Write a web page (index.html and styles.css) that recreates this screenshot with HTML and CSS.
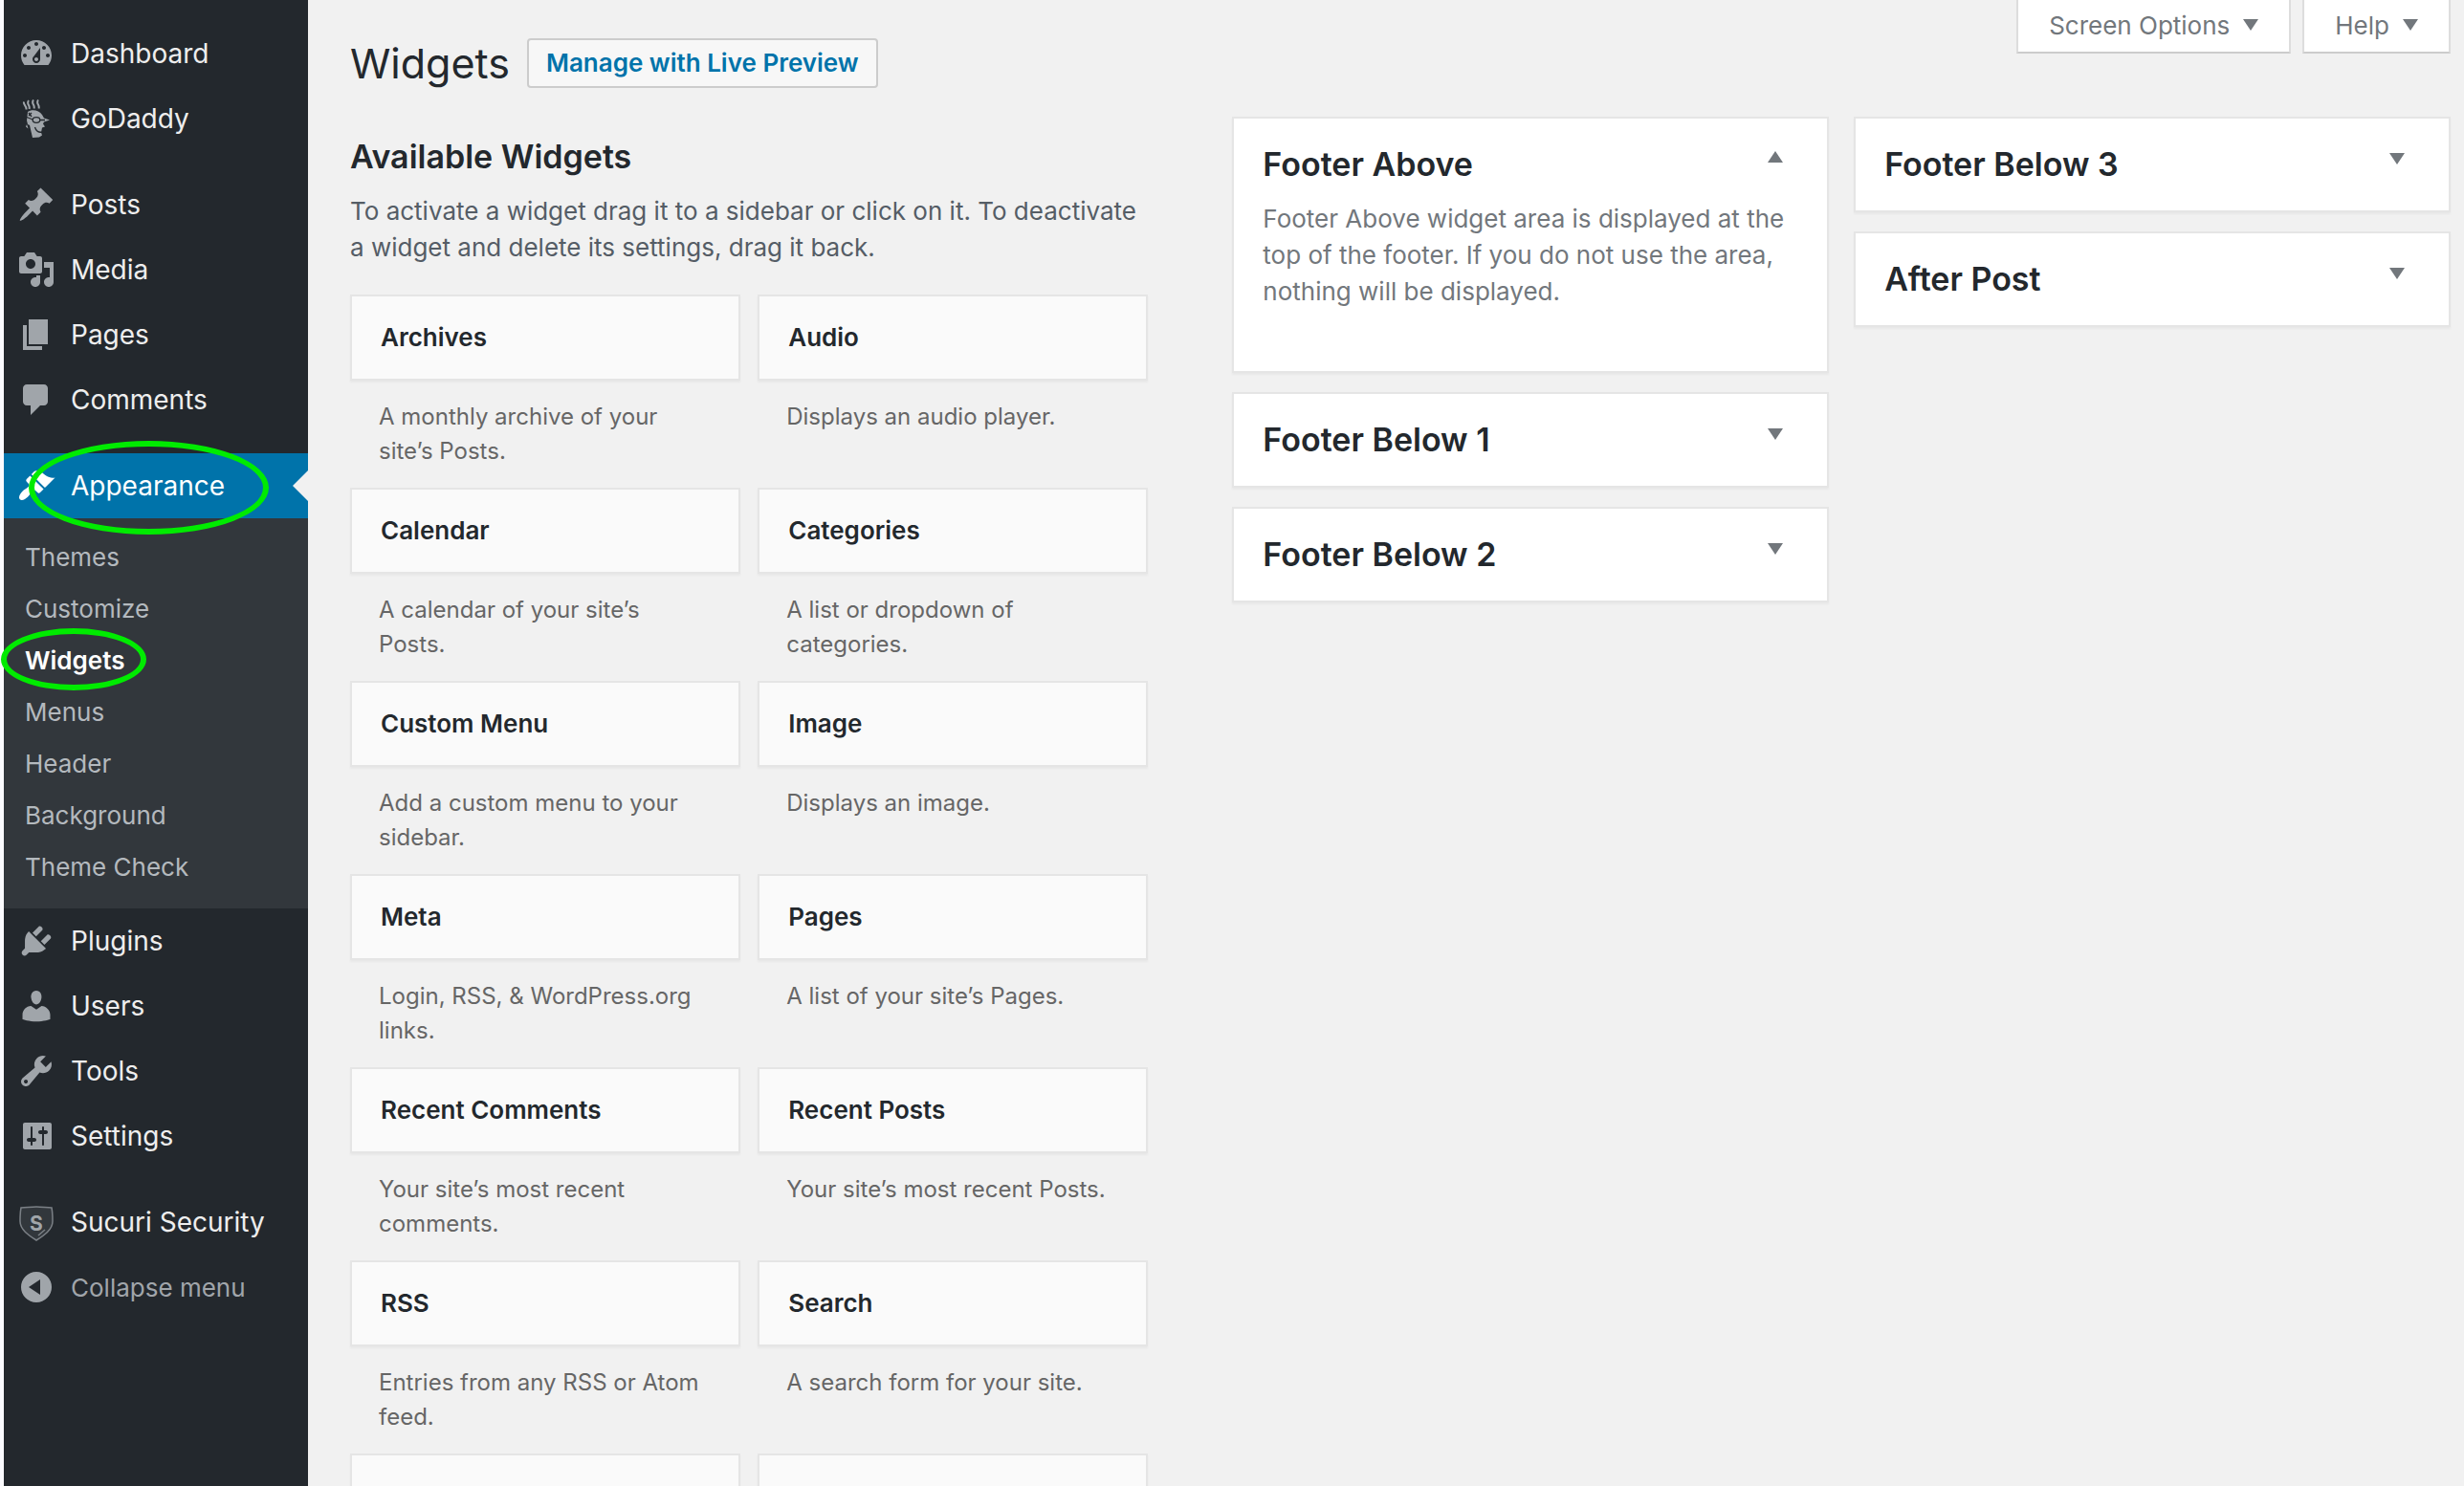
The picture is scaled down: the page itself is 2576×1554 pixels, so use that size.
FILE: index.html
```html
<!DOCTYPE html>
<html lang="en">
<head>
    <meta charset="UTF-8">
    <meta name="viewport" content="width=device-width, initial-scale=1.0">
    <title>Widgets</title>
    <link rel="stylesheet" href="styles.css">
</head>
<body>
    <nav class="admin-menu">
        <ul class="menu-list">
            <li><a class="menu-item" href="#">
                <svg class="icon" viewBox="0 0 20 20"><path d="M3.76 16h12.48c1.1-1.37 1.76-3.11 1.76-5 0-4.42-3.58-8-8-8s-8 3.58-8 8c0 1.89.66 3.63 1.76 5zM10 4c.55 0 1 .45 1 1s-.45 1-1 1-1-.45-1-1 .45-1 1-1zM6 6c.55 0 1 .45 1 1s-.45 1-1 1-1-.45-1-1 .45-1 1-1zm8 0c.55 0 1 .45 1 1s-.45 1-1 1-1-.45-1-1 .45-1 1-1zm-5.37 5.55L12 7v6c0 1.1-.9 2-2 2s-2-.9-2-2c0-.57.24-1.08.63-1.45zM4 10c.55 0 1 .45 1 1s-.45 1-1 1-1-.45-1-1 .45-1 1-1zm12 0c.55 0 1 .45 1 1s-.45 1-1 1-1-.45-1-1 .45-1 1-1zm-5 3c0-.55-.45-1-1-1s-1 .45-1 1 .45 1 1 1 1-.45 1-1z" fill-rule="evenodd"/></svg>
                Dashboard</a></li>
            <li><a class="menu-item" href="#">
                <svg class="icon" viewBox="0 0 40 40">
                    <g fill="none" stroke="#a0a5aa" stroke-width="2"><path d="M7 2.500c-1 3 3 4 2.500 8M12 1c-3 4 2 5 .5 9M17 .500c-3 4 2 5 .5 9M22 .500c-3 4 2 5 .5 9"/></g>
                    <path d="M11 13c4-3 12-2 15 3l2 3.500 6 2-6 2-1 2 2 3-3 1-1 5 1 3-3 2-7 .5-3-13-2-1-1-4z"/>
                    <path d="M10 26l1.500 4.500-2.500-2z"/>
                    <g fill="none" stroke="#23282d" stroke-width="1.300"><ellipse cx="20" cy="21.500" rx="3.800" ry="2.800"/><path d="M10 18.500l6.200 2.500M24 21.500h5M18.500 29c1 4 4 6 7.500 5M12 14l3 4M15 14l-3 3"/></g>
                </svg>
                GoDaddy</a></li>
            <li class="separator"></li>
            <li><a class="menu-item" href="#">
                <svg class="icon" viewBox="0 0 20 20"><path d="M10.440 3.020l1.820-1.820 6.360 6.350-1.830 1.820c-1.050-.68-2.480-.57-3.410.36l-.75.75c-.92.93-1.040 2.350-.35 3.410l-1.830 1.820-2.410-2.410-2.800 2.790c-.42.42-3.380 2.710-3.800 2.290s1.860-3.390 2.280-3.810l2.790-2.790L4.100 9.360l1.830-1.820c1.050.69 2.480.57 3.400-.36l.75-.75c.93-.92 1.050-2.350.36-3.410z"/></svg>
                Posts</a></li>
            <li><a class="menu-item" href="#">
                <svg class="icon" viewBox="0 0 20 20"><path d="M13 11V4c0-.55-.45-1-1-1h-1.670L9 1H5L3.670 3H2c-.55 0-1 .45-1 1v7c0 .55.45 1 1 1h10c.55 0 1-.45 1-1zM7 4.500c1.380 0 2.500 1.120 2.500 2.500S8.380 9.500 7 9.500 4.500 8.380 4.500 7 5.620 4.500 7 4.500zM14 6h5v10.500c0 1.380-1.120 2.500-2.500 2.500S14 17.880 14 16.500s1.120-2.500 2.500-2.500c.17 0 .34.02.5.05V9h-3V6zm-4 8.050V13h2v3.500c0 1.380-1.120 2.500-2.500 2.500S7 17.880 7 16.500 8.120 14 9.500 14c.17 0 .34.02.5.05z" fill-rule="evenodd"/></svg>
                Media</a></li>
            <li><a class="menu-item" href="#">
                <svg class="icon" viewBox="0 0 20 20"><path d="M6 15V2h10v13H6zm-1 1h8v2H3V5h2v11z"/></svg>
                Pages</a></li>
            <li><a class="menu-item" href="#">
                <svg class="icon" viewBox="0 0 20 20"><path d="M5 2h9c1.100 0 2 .9 2 2v7c0 1.100-.9 2-2 2h-2l-5 5v-5H5c-1.100 0-2-.9-2-2V4c0-1.100.9-2 2-2z"/></svg>
                Comments</a></li>
            <li class="separator"></li>
            <li>
                <a class="menu-item current" href="#">
                    <svg class="icon" viewBox="0 0 20 20"><path d="M14.480 11.060L7.410 3.990l1.500-1.500c.5-.56 2.300-.47 3.510.32 1.210.8 1.430 1.280 2.910 2.100 1.180.64 2.450 1.260 4.450.85zm-.71.71L6.700 4.700 4.930 6.470c-.39.39-.39 1.020 0 1.410l1.060 1.060c.39.39.39 1.030 0 1.420-.6.6-1.430 1.110-2.210 1.690-.35.26-.7.53-1.010.84C1.430 14.230.4 16.080 1.400 17.070c.99 1 2.840-.03 4.180-1.360.31-.31.58-.66.85-1.020.57-.78 1.080-1.610 1.690-2.210.39-.39 1.020-.39 1.410 0l1.060 1.060c.39.39 1.020.39 1.410 0z"/></svg>
                    Appearance
                    <span class="circle circle-large"></span>
                </a>
                <ul class="submenu">
                    <li><a href="#">Themes</a></li>
                    <li><a href="#">Customize</a></li>
                    <li><a class="active" href="#">Widgets<span class="circle circle-small"></span></a></li>
                    <li><a href="#">Menus</a></li>
                    <li><a href="#">Header</a></li>
                    <li><a href="#">Background</a></li>
                    <li><a href="#">Theme Check</a></li>
                </ul>
            </li>
            <li><a class="menu-item" href="#">
                <svg class="icon" viewBox="0 0 20 20"><path d="M13.110 4.360L9.870 7.600 8 5.730l3.240-3.240c.35-.34 1.050-.2 1.560.32.52.51.66 1.210.31 1.550zm-8 1.770l.91-1.120 9.010 9.010-1.190.84c-.71.71-2.630 1.160-3.820 1.160H6.140L4.900 17.260c-.59.59-1.540.59-2.120 0-.59-.58-.59-1.530 0-2.120l1.240-1.240v-3.880c0-1.130.4-3.190 1.090-3.890zm7.260 3.970l3.240-3.240c.34-.35 1.040-.21 1.550.31.52.51.66 1.210.31 1.550l-3.240 3.250z"/></svg>
                Plugins</a></li>
            <li><a class="menu-item" href="#">
                <svg class="icon" viewBox="0 0 20 20"><path d="M10 9.250c-2.270 0-2.730-3.440-2.730-3.440C7 4.020 7.820 2 9.970 2c2.160 0 2.980 2.020 2.710 3.810 0 0-.41 3.440-2.680 3.440zm0 2.570L12.720 10c2.390 0 4.520 2.330 4.520 4.530v2.490s-3.650 1.130-7.240 1.130c-3.650 0-7.240-1.130-7.240-1.130v-2.490c0-2.250 1.940-4.480 4.470-4.480z"/></svg>
                Users</a></li>
            <li><a class="menu-item" href="#">
                <svg class="icon" viewBox="0 0 20 20"><path d="M16.680 9.770c-1.340 1.340-3.300 1.670-4.950.99l-5.410 6.520c-.99.99-2.590.99-3.580 0s-.99-2.590 0-3.570l6.520-5.420c-.68-1.650-.35-3.610.99-4.950 1.280-1.280 3.120-1.620 4.720-1.060l-2.890 2.890 2.820 2.820 2.860-2.870c.53 1.580.18 3.390-1.080 4.650zM3.810 16.210c.4.39 1.040.39 1.430 0 .4-.4.4-1.040 0-1.430-.39-.4-1.030-.4-1.430 0-.39.39-.39 1.030 0 1.430z" fill-rule="evenodd"/></svg>
                Tools</a></li>
            <li><a class="menu-item" href="#">
                <svg class="icon" viewBox="0 0 20 20"><path d="M18 16V4c0-.55-.45-1-1-1H4c-.55 0-1 .45-1 1v12c0 .55.45 1 1 1h13c.55 0 1-.45 1-1zM8 11h1c.55 0 1 .45 1 1s-.45 1-1 1H8v1.500c0 .28-.22.5-.5.5s-.5-.22-.5-.5V13H6c-.55 0-1-.45-1-1s.45-1 1-1h1V5.500c0-.28.22-.5.5-.5s.5.22.5.5V11zm5-2h-1c-.55 0-1-.45-1-1s.45-1 1-1h1V5.500c0-.28.22-.5.5-.5s.5.22.5.5V7h1c.55 0 1 .45 1 1s-.45 1-1 1h-1v5.500c0 .28-.22.5-.5.5s-.5-.22-.5-.5V9z" transform="translate(0 0)" fill-rule="evenodd"/></svg>
                Settings</a></li>
            <li class="separator"></li>
            <li><a class="menu-item" href="#">
                <svg class="icon" viewBox="0 0 40 40">
                    <path d="M4 5c5 0 10-1 16-1s11 1 16 1c1 5 1 9 1 14 0 9-9 15-17 20C12 34 3 28 3 19c0-5 0-9 1-14z" fill="#32373c" stroke="#7b8086" stroke-width="1.500"/>
                    <path d="M22 34l7-6" stroke="#7b8086" stroke-width="1.500"/>
                    <text class="shield-letter" x="20" y="29" text-anchor="middle">S</text>
                </svg>
                Sucuri Security</a></li>
            <li><button type="button" class="menu-item collapse">
                <svg class="icon" viewBox="0 0 20 20"><path d="M10 2a8 8 0 1 1 0 16 8 8 0 0 1 0-16zm2 4l-6 4 6 4z" fill-rule="evenodd"/></svg>
                Collapse menu</button></li>
        </ul>
    </nav>

    <main class="content">
        <div class="screen-meta">
            <button type="button" class="meta-tab">Screen Options <span class="arrow"></span></button>
            <button type="button" class="meta-tab">Help <span class="arrow"></span></button>
        </div>

        <header class="page-header">
            <h1>Widgets</h1>
            <a class="page-action" href="#">Manage with Live Preview</a>
        </header>

        <div class="columns">
            <section class="available">
                <h2>Available Widgets</h2>
                <p class="intro">To activate a widget drag it to a sidebar or click on it. To deactivate a widget and delete its settings, drag it back.</p>
                <div class="widget-list">
                    <div class="widget"><h3>Archives</h3><p>A monthly archive of your site’s Posts.</p></div>
                    <div class="widget"><h3>Audio</h3><p>Displays an audio player.</p></div>
                    <div class="widget"><h3>Calendar</h3><p>A calendar of your site’s Posts.</p></div>
                    <div class="widget"><h3>Categories</h3><p>A list or dropdown of categories.</p></div>
                    <div class="widget"><h3>Custom Menu</h3><p>Add a custom menu to your sidebar.</p></div>
                    <div class="widget"><h3>Image</h3><p>Displays an image.</p></div>
                    <div class="widget"><h3>Meta</h3><p>Login, RSS, &amp; WordPress.org links.</p></div>
                    <div class="widget"><h3>Pages</h3><p>A list of your site’s Pages.</p></div>
                    <div class="widget"><h3>Recent Comments</h3><p>Your site’s most recent comments.</p></div>
                    <div class="widget"><h3>Recent Posts</h3><p>Your site’s most recent Posts.</p></div>
                    <div class="widget"><h3>RSS</h3><p>Entries from any RSS or Atom feed.</p></div>
                    <div class="widget"><h3>Search</h3><p>A search form for your site.</p></div>
                    <div class="widget"><h3></h3></div>
                    <div class="widget"><h3></h3></div>
                </div>
            </section>

            <section class="sidebars">
                <div class="sidebar-column">
                    <div class="panel open">
                        <div class="panel-title">
                            <h2>Footer Above</h2>
                            <button type="button" class="toggle" aria-label="Toggle Footer Above"><span class="arrow arrow-up"></span></button>
                        </div>
                        <p>Footer Above widget area is displayed at the top of the footer. If you do not use the area, nothing will be displayed.</p>
                    </div>
                    <div class="panel">
                        <div class="panel-title">
                            <h2>Footer Below 1</h2>
                            <button type="button" class="toggle" aria-label="Toggle Footer Below 1"><span class="arrow"></span></button>
                        </div>
                    </div>
                    <div class="panel">
                        <div class="panel-title">
                            <h2>Footer Below 2</h2>
                            <button type="button" class="toggle" aria-label="Toggle Footer Below 2"><span class="arrow"></span></button>
                        </div>
                    </div>
                </div>
                <div class="sidebar-column">
                    <div class="panel">
                        <div class="panel-title">
                            <h2>Footer Below 3</h2>
                            <button type="button" class="toggle" aria-label="Toggle Footer Below 3"><span class="arrow"></span></button>
                        </div>
                    </div>
                    <div class="panel">
                        <div class="panel-title">
                            <h2>After Post</h2>
                            <button type="button" class="toggle" aria-label="Toggle After Post"><span class="arrow"></span></button>
                        </div>
                    </div>
                </div>
            </section>
        </div>
    </main>
</body>
</html>
```
FILE: styles.css
```css
* {
    box-sizing: border-box;
}

body {
    margin: 0;
    display: flex;
    height: 100vh;
    overflow: hidden;
    background: #f1f1f1;
    color: #23282d;
    font-family: Inter, "Liberation Sans", sans-serif;
    font-size: 26px;
}

h1, h2, h3, p, ul {
    margin: 0;
    padding: 0;
}

ul {
    list-style: none;
}

a {
    text-decoration: none;
}

button {
    font-family: inherit;
    border: none;
    background: none;
    cursor: pointer;
}

/* Admin menu */
.admin-menu {
    flex: none;
    width: 322px;
    padding-top: 22px;
    background: #23282d;
    border-left: 4px solid #fbfbfe;
}

.menu-item {
    position: relative;
    display: flex;
    align-items: center;
    gap: 16px;
    width: 100%;
    height: 68px;
    padding: 0 14px;
    color: #eee;
    font-size: 28px;
    white-space: nowrap;
}

.icon {
    flex: none;
    width: 40px;
    height: 40px;
    fill: #a0a5aa;
}

.separator {
    height: 22px;
}

.current {
    background: #0073aa;
    color: #fff;
}

.current .icon {
    fill: #fff;
}

/* notch pointing from the page into the current item */
.current::after {
    content: "";
    position: absolute;
    right: 0;
    top: 18px;
    border: 16px solid transparent;
    border-left-width: 0;
    border-right-color: #f1f1f1;
}

.submenu {
    padding: 14px 0 16px;
    background: #32373c;
}

.submenu a {
    position: relative;
    display: block;
    padding: 0 22px;
    color: #b4b9be;
    font-size: 26px;
    line-height: 54px;
}

.submenu .active {
    color: #fff;
    font-weight: 600;
}

.collapse {
    color: #a0a5aa;
    font-size: 26px;
}

.shield-letter {
    fill: #a0a5aa;
    font-size: 21px;
    font-weight: 700;
}

/* hand-drawn highlights over the menu */
.circle {
    position: absolute;
    z-index: 1;
    border: 6px solid #00eb00;
    border-radius: 50%;
}

.circle-large {
    left: 26px;
    top: -13px;
    width: 251px;
    height: 98px;
}

.circle-small {
    left: -3px;
    top: -7px;
    width: 152px;
    height: 65px;
}

/* Page */
.content {
    flex: 1;
    padding: 0 14px 0 44px;
}

.screen-meta {
    float: right;
    display: flex;
    gap: 12px;
}

.meta-tab {
    display: flex;
    align-items: center;
    gap: 14px;
    height: 56px;
    padding: 0 32px 2px;
    background: #fff;
    border: 2px solid #ddd;
    border-top: none;
    border-bottom-color: #ccc;
    color: #72777c;
    font-size: 26px;
}

.arrow {
    border: 8px solid transparent;
    border-top: 12px solid #72777c;
    border-bottom: none;
}

.arrow-up {
    border: 8px solid transparent;
    border-top: none;
    border-bottom: 12px solid #72777c;
}

.page-header {
    display: flex;
    align-items: center;
    gap: 18px;
    height: 122px;
    padding-top: 10px;
}

h1 {
    font-size: 43px;
    font-weight: 400;
}

.page-action {
    padding: 0 18px;
    background: #f7f7f7;
    border: 2px solid #ccc;
    border-radius: 4px;
    color: #0073aa;
    font-weight: 600;
    line-height: 48px;
}

h2 {
    font-size: 34px;
    font-weight: 600;
    line-height: 48px;
}

.columns {
    display: grid;
    grid-template-columns: 38% 58%;
    justify-content: space-between;
}

.available h2 {
    padding-top: 18px;
}

.intro {
    margin-top: 14px;
    color: #555d66;
    line-height: 38px;
}

.widget-list {
    display: grid;
    grid-template-columns: 1fr 1fr;
    grid-auto-rows: 202px;
    column-gap: 18px;
    margin-top: 30px;
}

.widget h3 {
    height: 90px;
    padding: 0 30px;
    background: #fafafa;
    border: 2px solid #e5e5e5;
    box-shadow: 0 2px 2px rgba(0, 0, 0, 0.04);
    font-size: 26px;
    font-weight: 600;
    line-height: 86px;
}

.widget p {
    padding: 20px 30px;
    color: #666;
    font-size: 24px;
    line-height: 36px;
}

.sidebars {
    display: grid;
    grid-template-columns: 1fr 1fr;
    column-gap: 26px;
}

.sidebar-column {
    display: flex;
    flex-direction: column;
    gap: 20px;
}

.panel {
    background: #fff;
    border: 2px solid #e5e5e5;
    box-shadow: 0 2px 2px rgba(0, 0, 0, 0.04);
}

.panel-title {
    display: flex;
    justify-content: space-between;
    height: 96px;
    padding: 24px 30px;
}

.toggle {
    display: flex;
    align-items: flex-start;
    padding: 12px 16px;
}

.open .toggle {
    padding-top: 10px;
}

.panel p {
    padding: 0 30px 64px;
    margin-top: -10px;
    color: #72777c;
    line-height: 38px;
}
```
